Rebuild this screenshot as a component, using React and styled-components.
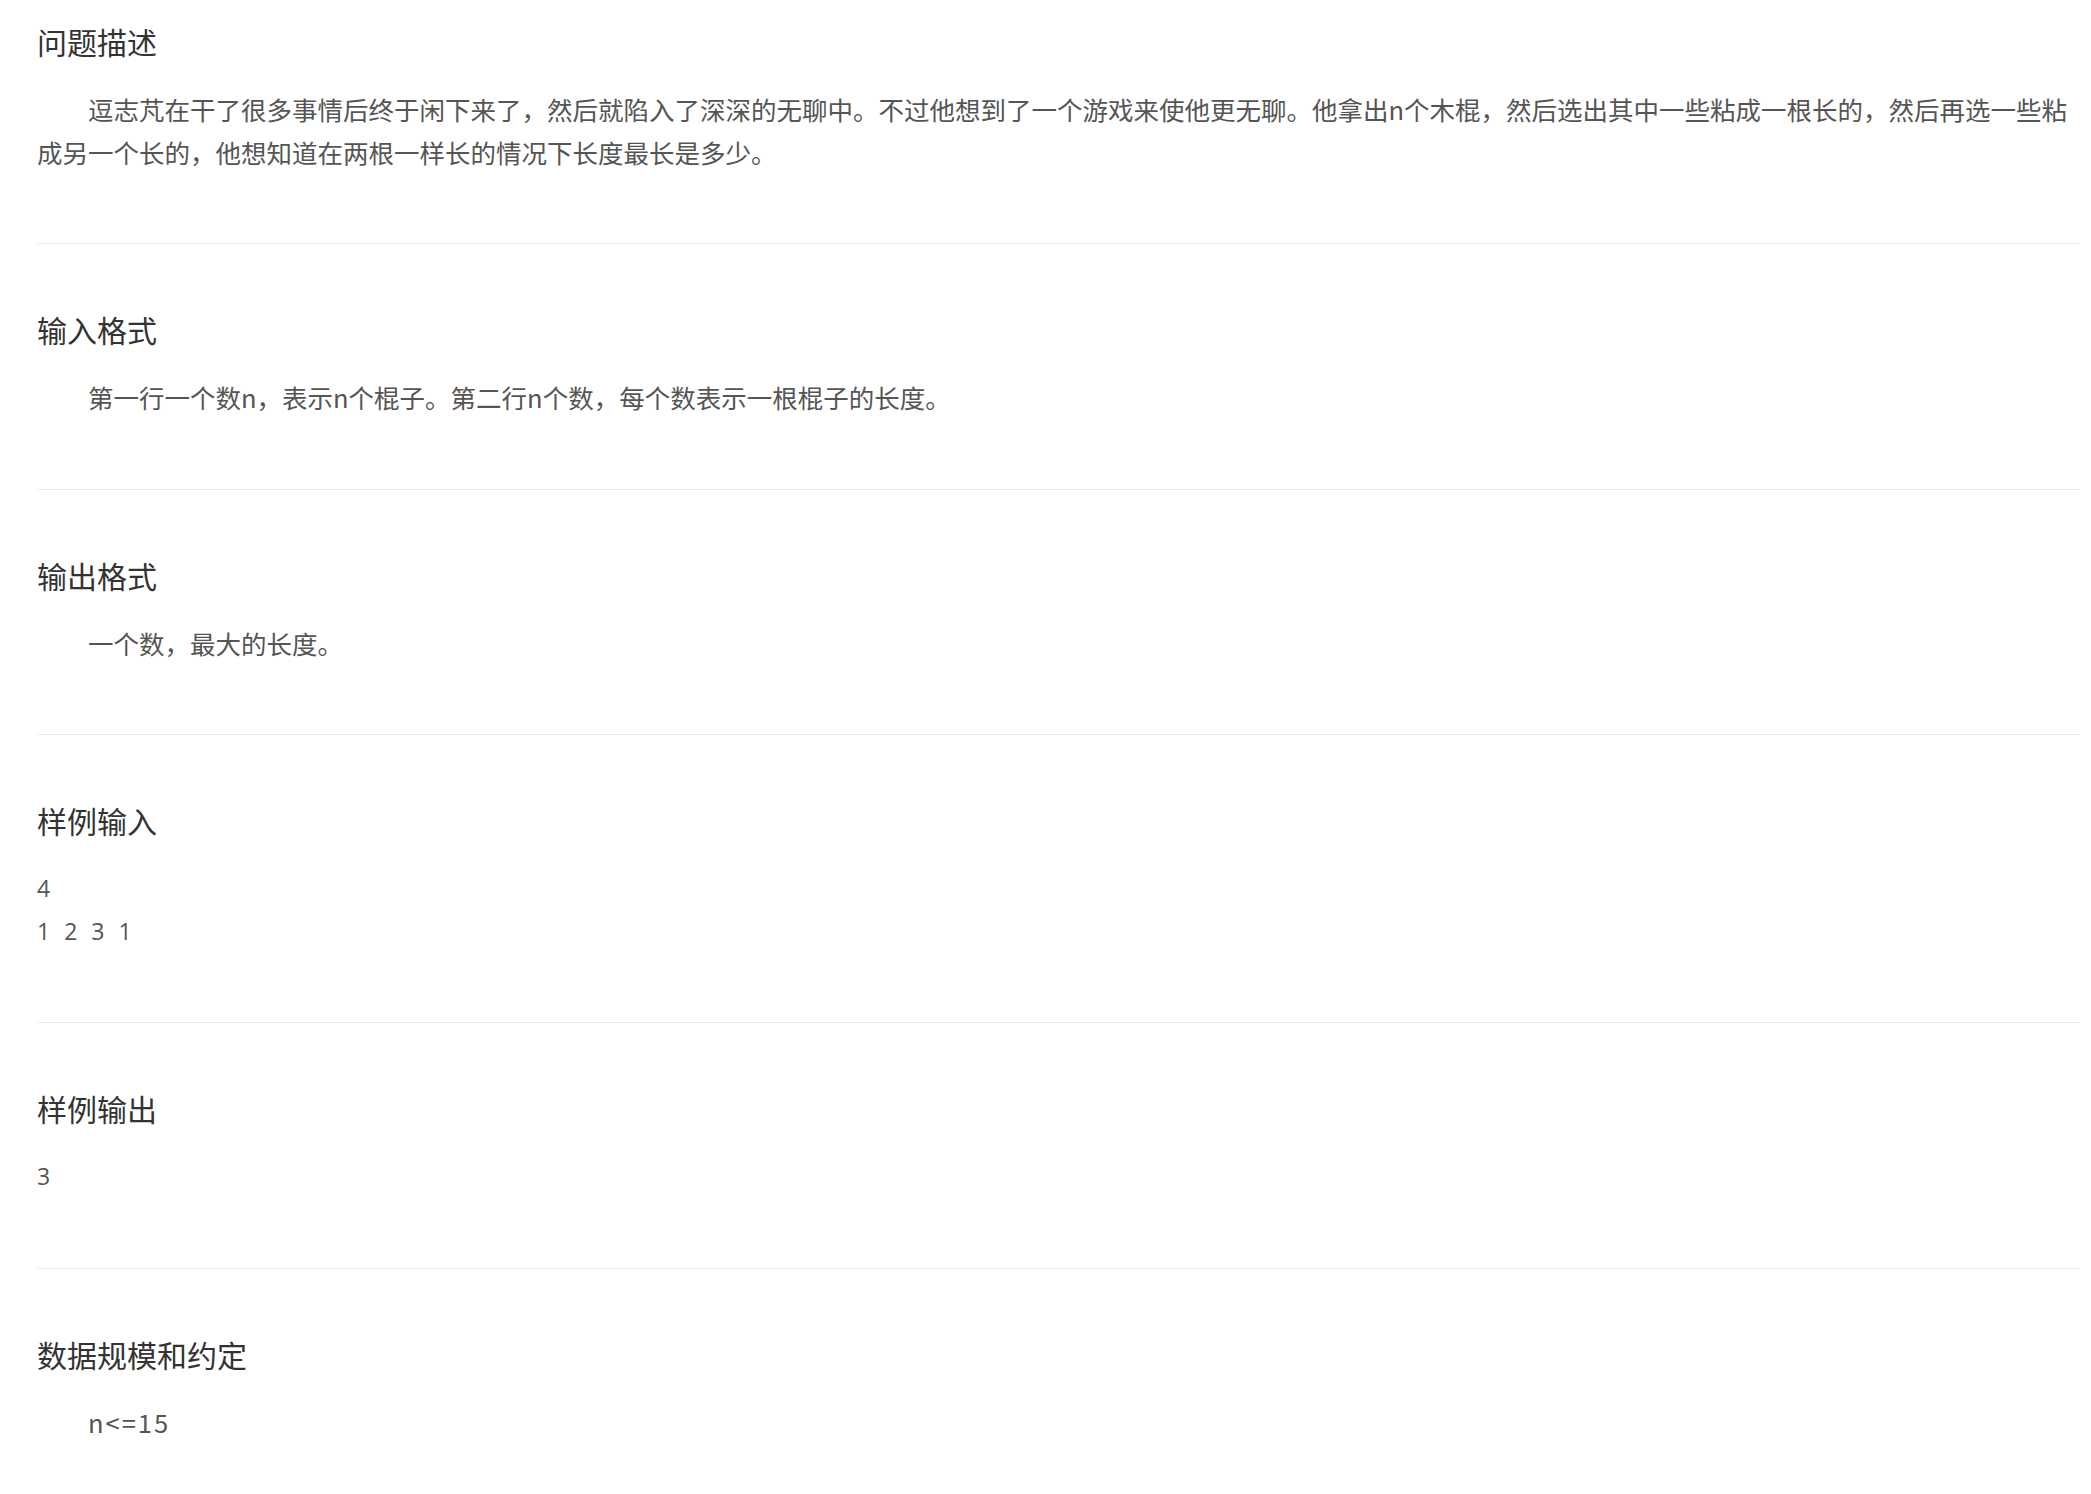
import React from "react";
import styled, { createGlobalStyle } from "styled-components";

const Global = createGlobalStyle`
  body { margin: 0; background: #fff; font-family: "Noto Sans CJK SC", "Noto Sans", sans-serif; }
`;

const Page = styled.div`
  padding: 0 11px 40px 37px;
`;

const Section = styled.section`
  padding: ${(p) => (p.$first ? "21px" : "65px")} 0 ${(p) => (p.$last ? "20px" : "70px")};
  border-bottom: ${(p) => (p.$last ? "none" : "1px solid #ececec")};
`;

const Title = styled.h3`
  margin: 0;
  font-size: 30px;
  line-height: 40px;
  font-weight: 400;
  color: #333;
`;

const Para = styled.p`
  margin: 27px 0 0;
  font-size: 25.5px;
  line-height: 42.5px;
  color: #555;
  text-indent: ${(p) => (p.$noIndent ? "0" : "2em")};
  letter-spacing: ${(p) => p.$spacing || "0"};
`;

const Sample = styled.div`
  margin-top: 27px;
  font-family: "Open Sans", "Noto Sans", sans-serif;
  font-size: 23px;
  line-height: 42.5px;
  color: #555;
  white-space: pre;
  word-spacing: 8px;
`;

export default function App() {
  return (
    <Page>
      <Global />
      <Section $first>
        <Title>问题描述</Title>
        <Para>
          逗志芃在干了很多事情后终于闲下来了，然后就陷入了深深的无聊中。不过他想到了一个游戏来使他更无聊。他拿出n个木棍，然后选出其中一些粘成一根长的，然后再选一些粘成另一个长的，他想知道在两根一样长的情况下长度最长是多少。
        </Para>
      </Section>
      <Section>
        <Title>输入格式</Title>
        <Para>第一行一个数n，表示n个棍子。第二行n个数，每个数表示一根棍子的长度。</Para>
      </Section>
      <Section>
        <Title>输出格式</Title>
        <Para>一个数，最大的长度。</Para>
      </Section>
      <Section>
        <Title>样例输入</Title>
        <Sample>{"4\n1 2 3 1"}</Sample>
      </Section>
      <Section>
        <Title>样例输出</Title>
        <Sample>3</Sample>
      </Section>
      <Section $last>
        <Title>数据规模和约定</Title>
        <Para $spacing="2px">n&lt;=15</Para>
      </Section>
    </Page>
  );
}
